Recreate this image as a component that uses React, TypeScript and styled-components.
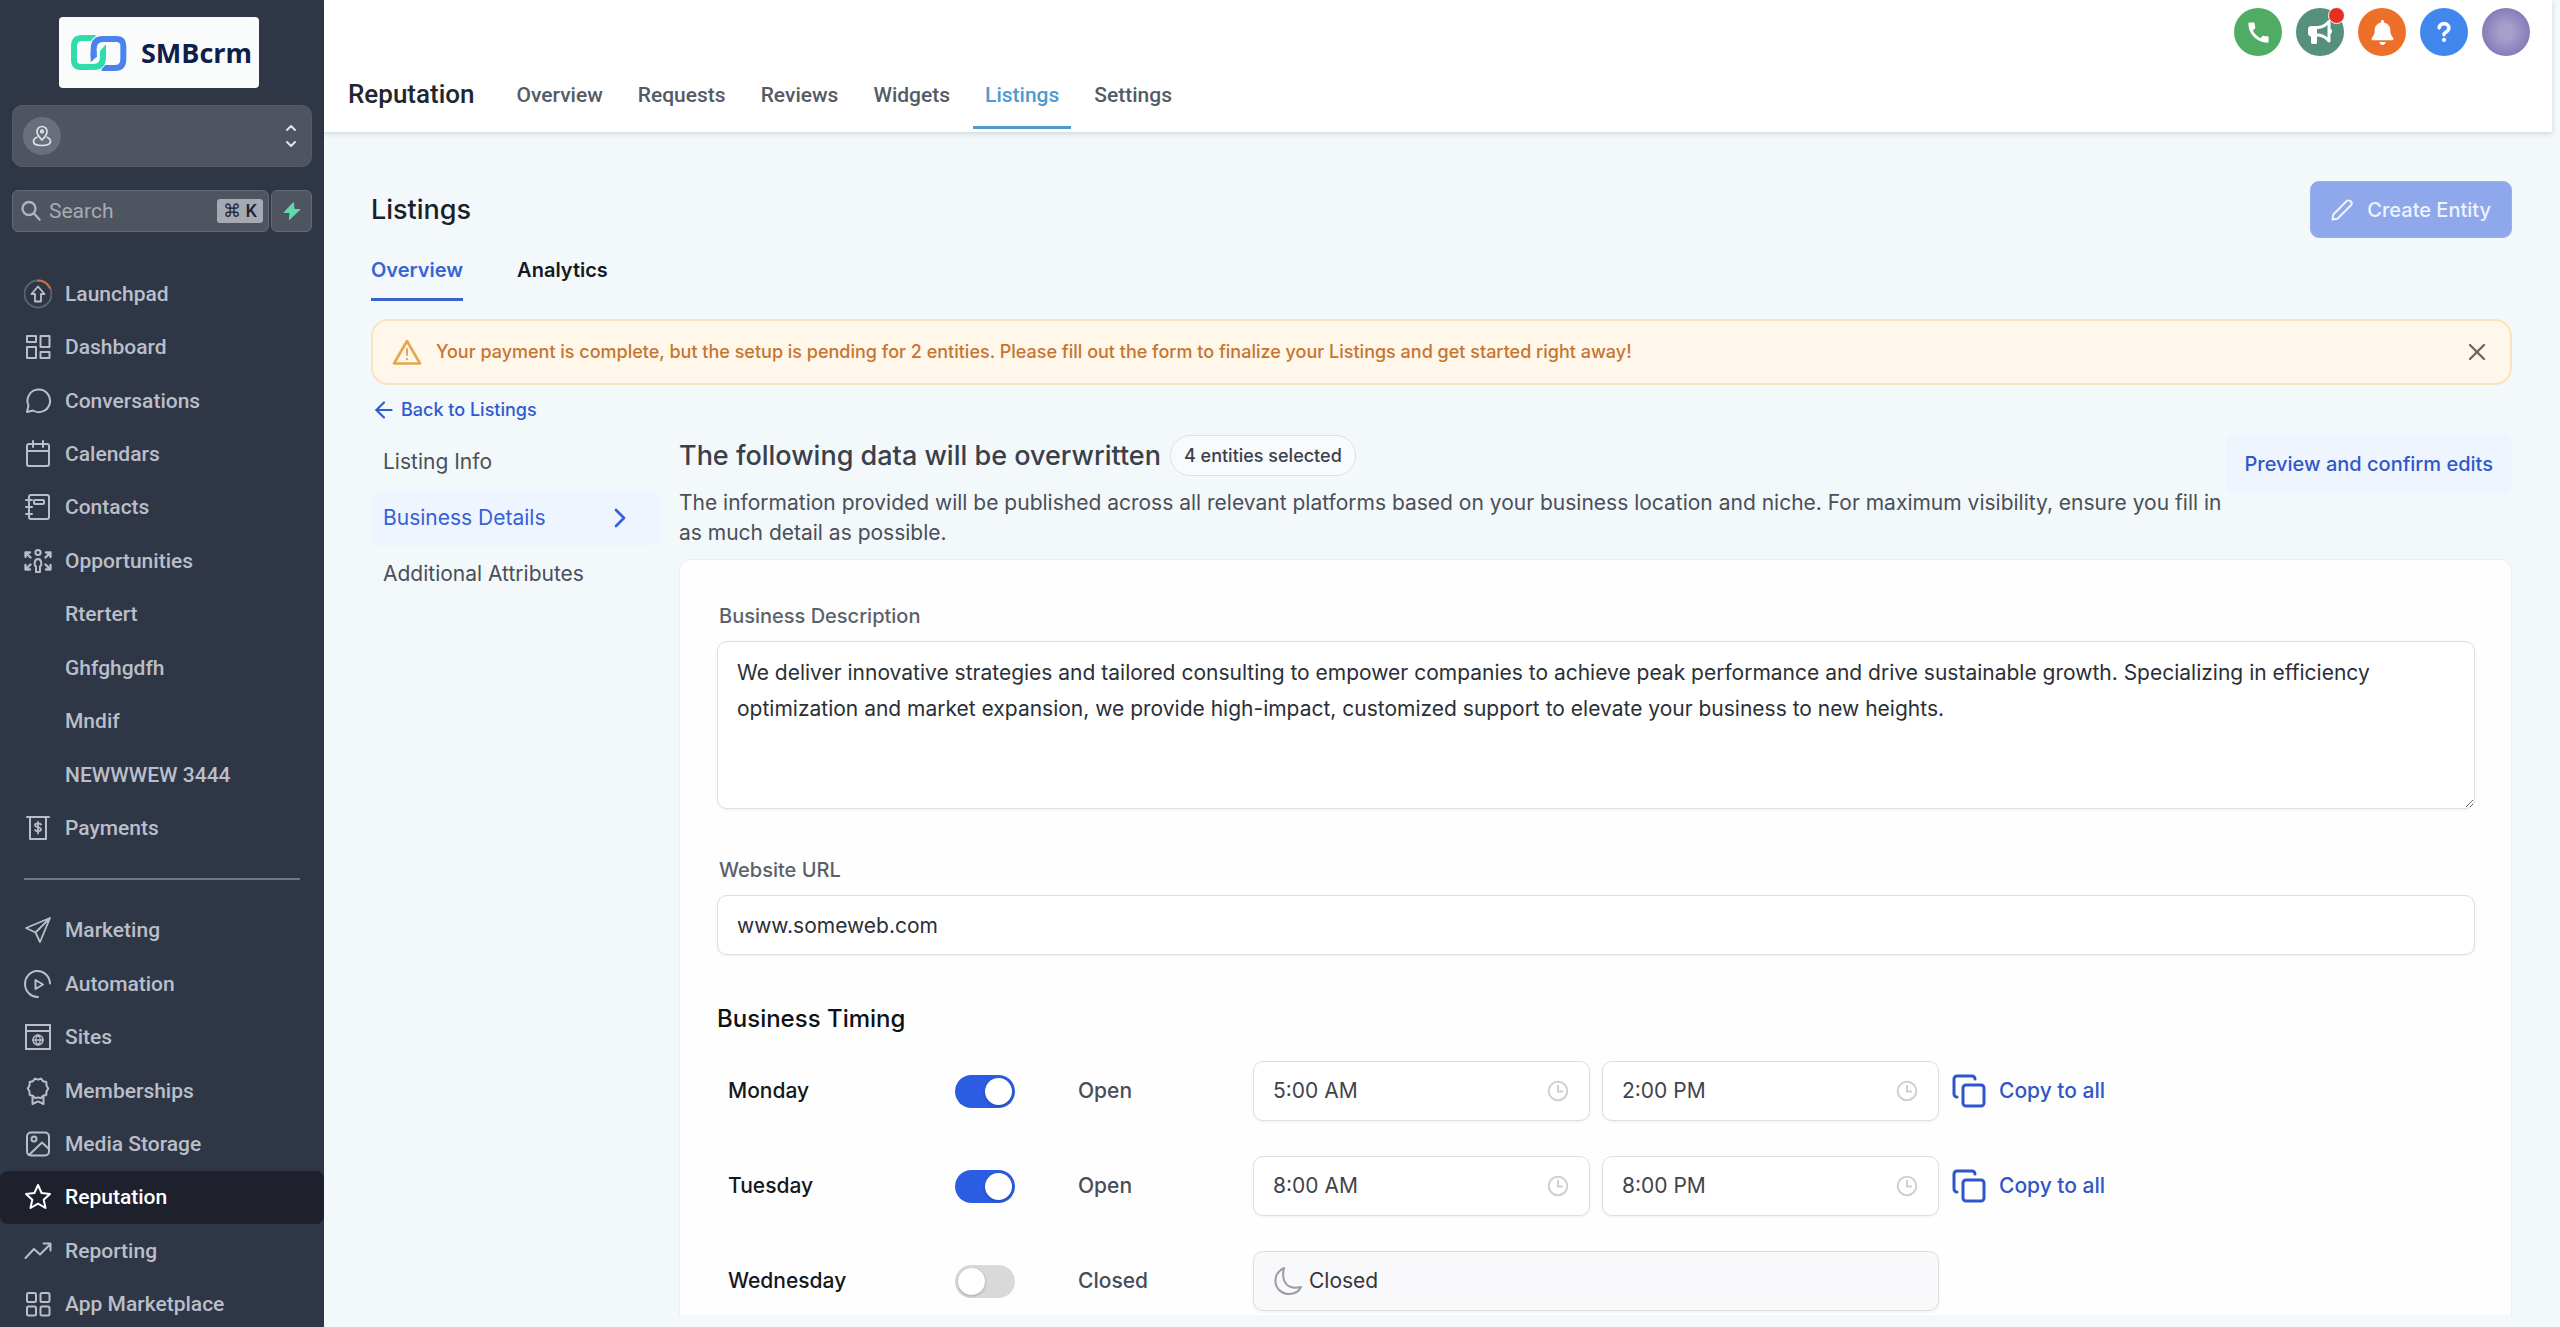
import React from "react";
import styled, { createGlobalStyle, css } from "styled-components";
import { ArrowLeft, ChevronDown, ChevronRight, ChevronUp, Copy, X } from "lucide-react";
import { FaBell, FaBullhorn, FaQuestion } from "react-icons/fa6";
import { MdCall } from "react-icons/md";

const ui = `Inter, "Liberation Sans", sans-serif`;
const shell = `Roboto, "Liberation Sans", sans-serif`;

const GlobalStyle = createGlobalStyle`
  *, *::before, *::after { box-sizing: border-box; }
  body { margin: 0; background: #f3f8fb; font-family: ${ui}; color: #1d2129; }
  button, input, textarea { font: inherit; color: inherit; }
  button { cursor: pointer; }
  a { color: inherit; text-decoration: none; }
  h1, h2, h3, p { margin: 0; }
`;

const Layout = styled.div`
  display: flex;
  height: 100vh;
  overflow: hidden;
`;

/* ---------- Sidebar ---------- */

const Sidebar = styled.aside`
  display: flex;
  flex-direction: column;
  flex: 0 0 324px;
  min-width: 0;
  padding-top: 17px;
  background: #2f3645;
  font-family: ${shell};
`;

const Logo = styled.a`
  display: flex;
  align-items: center;
  align-self: center;
  gap: 14px;
  width: 200px;
  height: 71px;
  padding-left: 12px;
  margin-right: 6px;
  border-radius: 4px;
  background: #fafbfb;
`;

const LogoText = styled.span`
  color: #0e2048;
  font: 700 27px/36px "Open Sans", "Noto Sans", sans-serif;
`;

const AccountButton = styled.button`
  display: flex;
  align-items: center;
  justify-content: space-between;
  height: 62px;
  margin: 17px 12px 0;
  padding: 0 12px 0 10px;
  border: 1px solid #555c68;
  border-radius: 10px;
  background: #4e5561;
  color: #dfe2e7;
`;

const AccountBadge = styled.span`
  display: grid;
  place-items: center;
  width: 38px;
  height: 38px;
  border-radius: 50%;
  background: #6a707b;
`;

const Carets = styled.span`
  display: flex;
  flex-direction: column;
`;

const SearchRow = styled.div`
  display: flex;
  gap: 2px;
  margin: 23px 12px 35px;
`;

const SearchBox = styled.label`
  display: flex;
  align-items: center;
  flex: 1;
  min-width: 0;
  gap: 8px;
  height: 42px;
  padding: 0 5px 0 8px;
  border: 1px solid #646b77;
  border-radius: 6px;
  background: #4e5561;
  color: #aeb3bc;
`;

const SearchInput = styled.input`
  flex: 1;
  min-width: 0;
  padding: 0;
  border: 0;
  outline: 0;
  background: none;
  font-size: 21px;
  line-height: 28px;
  &::placeholder { color: #a5abb5; opacity: 1; }
`;

const Shortcut = styled.kbd`
  padding: 0 6px;
  border-radius: 3px;
  background: #a4a9b2;
  color: #1f2530;
  font: 500 18px/24px ${shell};
  white-space: nowrap;
`;

const BoltButton = styled.button`
  display: grid;
  place-items: center;
  width: 41px;
  padding: 0;
  border: 1px solid #646b77;
  border-radius: 6px;
  background: #4e5561;
`;

const Nav = styled.nav`
  display: flex;
  flex-direction: column;
  flex: 1;
  min-height: 0;
  margin-bottom: -4px;
`;

const NavLink = styled.a<{ $active?: boolean }>`
  display: flex;
  align-items: center;
  flex: 1 0 0;
  gap: 13px;
  padding-left: 24px;
  border-radius: 8px;
  color: #b9bfca;
  font-size: 21px;
  line-height: 28px;
  font-weight: 500;
  ${(p) => p.$active && css`background: #1e202c; color: #fff;`}
`;

const NavIcon = styled.svg`
  flex: 0 0 28px;
  height: 32px;
  fill: none;
  stroke: currentColor;
  stroke-width: 2;
  stroke-linecap: round;
  stroke-linejoin: round;
`;

const NavDivider = styled.hr`
  flex: none;
  height: 2px;
  margin: 23px 24px 24px;
  border: 0;
  background: #6f7785;
`;

/* ---------- Header ---------- */

const Main = styled.main`
  display: flex;
  flex-direction: column;
  flex: 1;
  min-width: 0;
`;

const Header = styled.header`
  display: flex;
  flex-direction: column;
  justify-content: space-between;
  height: 132px;
  margin-right: 8px;
  padding: 8px 22px 0 24px;
  background: #fff;
  box-shadow: 0 2px 5px rgba(40, 50, 60, 0.16);
  font-family: ${shell};
`;

const Actions = styled.div`
  display: flex;
  justify-content: flex-end;
  gap: 14px;
`;

const RoundButton = styled.button<{ $bg: string }>`
  position: relative;
  display: grid;
  place-items: center;
  width: 48px;
  height: 48px;
  padding: 0;
  border: 0;
  border-radius: 50%;
  background: ${(p) => p.$bg};
  color: #fff;
`;

const AlertDot = styled.span`
  position: absolute;
  top: -1px;
  right: -1px;
  width: 17px;
  height: 17px;
  border: 1px solid #fff;
  border-radius: 50%;
  background: #e8301f;
`;

const HeaderNav = styled.nav`
  display: flex;
  align-items: flex-end;
  gap: 11px;
`;

const HeaderTitle = styled.h1`
  margin-right: 19px;
  padding-bottom: 22px;
  color: #22262e;
  font-size: 26px;
  line-height: 32px;
  font-weight: 500;
`;

const HeaderTab = styled.a<{ $active?: boolean }>`
  padding: 0 12px 17px;
  margin-bottom: 3px;
  border-bottom: 3px solid ${(p) => (p.$active ? "#4d9bcf" : "transparent")};
  color: ${(p) => (p.$active ? "#4d9bcf" : "#555b65")};
  font-size: 21px;
  line-height: 28px;
  font-weight: 500;
`;

/* ---------- Page ---------- */

const Page = styled.div`
  display: flex;
  flex-direction: column;
  flex: 1;
  min-height: 0;
  padding: 49px 48px 12px 47px;
`;

const TitleRow = styled.div`
  display: flex;
  align-items: center;
  justify-content: space-between;
`;

const PageTitle = styled.h2`
  color: #1b2029;
  font-size: 27px;
  line-height: 36px;
  font-weight: 500;
`;

const CreateButton = styled.button`
  display: flex;
  align-items: center;
  gap: 14px;
  height: 57px;
  padding: 0 20px;
  border: 1px solid #97aef0;
  border-radius: 9px;
  background: #8fa8ec;
  color: #eef4ff;
  font-size: 20px;
  line-height: 28px;
  font-weight: 500;
`;

const Tabs = styled.nav`
  display: flex;
  gap: 54px;
  margin-top: 18px;
`;

const Tab = styled.a<{ $active?: boolean }>`
  padding-bottom: 14px;
  border-bottom: 3px solid ${(p) => (p.$active ? "#3763cf" : "transparent")};
  color: ${(p) => (p.$active ? "#3763d6" : "#16191f")};
  font-size: 20px;
  line-height: 28px;
  font-weight: 600;
`;

const Notice = styled.div`
  display: flex;
  align-items: center;
  gap: 14px;
  min-height: 66px;
  margin-top: 18px;
  padding: 0 19px;
  border: 2px solid #f8e5c0;
  border-radius: 17px;
  background: #fff7ea;
  color: #c7742f;
`;

const NoticeText = styled.p`
  flex: 1;
  font-size: 18px;
  line-height: 26px;
  font-weight: 500;
`;

const CloseButton = styled.button`
  display: grid;
  place-items: center;
  padding: 0;
  border: 0;
  background: none;
  color: #6b6659;
`;

const BackLink = styled.a`
  display: flex;
  align-items: center;
  align-self: flex-start;
  gap: 4px;
  margin-top: 12px;
  color: #2f5bd0;
  font-size: 18px;
  line-height: 26px;
  font-weight: 500;
`;

const Columns = styled.div`
  display: flex;
  flex: 1;
  gap: 18px;
  min-height: 0;
  margin-top: 11px;
`;

const SideMenu = styled.nav`
  flex: 0 0 290px;
`;

const SideLink = styled.a<{ $active?: boolean }>`
  display: flex;
  align-items: center;
  justify-content: space-between;
  height: 56px;
  padding: 0 25px 0 12px;
  border-radius: 12px;
  color: ${(p) => (p.$active ? "#3560d8" : "#4a4f58")};
  background: ${(p) => (p.$active ? "#eff5ff" : "none")};
  font-size: 21px;
  line-height: 30px;
`;

const Content = styled.section`
  display: flex;
  flex-direction: column;
  flex: 1;
  min-width: 0;
`;

const Intro = styled.div`
  display: flex;
  align-items: flex-start;
  justify-content: space-between;
`;

const HeadingRow = styled.div`
  display: flex;
  align-items: center;
  gap: 9px;
  margin-top: 1px;
`;

const Heading = styled.h3`
  color: #3a404b;
  font-size: 27px;
  line-height: 36px;
  font-weight: 500;
`;

const Chip = styled.span`
  padding: 0 13px;
  border: 1px solid #dfe1e5;
  border-radius: 20px;
  background: #f9fafb;
  color: #3a404b;
  font-size: 18px;
  line-height: 39px;
  font-weight: 500;
`;

const Description = styled.p`
  margin-top: 12px;
  color: #4a4f59;
  font-size: 21px;
  line-height: 30px;
`;

const PreviewButton = styled.button`
  flex: none;
  height: 60px;
  padding: 0 19px;
  border: 0;
  border-radius: 9px;
  background: #eff5ff;
  color: #2f58c8;
  font-size: 20px;
  line-height: 28px;
  font-weight: 500;
`;

const Card = styled.form`
  flex: 1;
  min-height: 0;
  margin-top: 11px;
  padding: 42px 36px 0 37px;
  overflow: hidden auto;
  scrollbar-width: none;
  border: 1px solid #ebeeee;
  border-bottom: 0;
  border-radius: 12px 12px 0 0;
  background: #fefefe;
`;

const Label = styled.label`
  display: block;
  padding-left: 2px;
  color: #5c6169;
  font-size: 20px;
  line-height: 28px;
  font-weight: 500;
`;

const boxed = css`
  border: 1px solid #dededf;
  border-radius: 10px;
  outline: 0;
  background: #fff;
  box-shadow: 0 1px 3px rgba(16, 24, 40, 0.06);
`;

const TextArea = styled.textarea`
  ${boxed}
  display: block;
  width: 100%;
  height: 168px;
  margin: 11px 0 47px;
  padding: 13px 19px;
  color: #2b2f36;
  font-size: 21px;
  line-height: 36px;
`;

const TextInput = styled.input`
  ${boxed}
  display: block;
  width: 100%;
  height: 60px;
  margin: 11px 0 46px;
  padding: 0 19px;
  color: #2b2f36;
  font-size: 21px;
`;

const Hours = styled.fieldset`
  display: grid;
  gap: 35px;
  margin: 0;
  padding: 0;
  border: 0;
`;

const HoursTitle = styled.legend`
  padding: 0;
  margin-bottom: 24px;
  color: #0e1116;
  font-size: 24px;
  line-height: 36px;
  font-weight: 500;
`;

const DayRow = styled.div`
  display: grid;
  grid-template-columns: 227px 123px 175px 686px auto 1fr;
  align-items: center;
  height: 60px;
  padding-left: 11px;
`;

const DayName = styled.label`
  color: #14171c;
  font-size: 21px;
  line-height: 28px;
  font-weight: 500;
`;

const Toggle = styled.input`
  appearance: none;
  display: flex;
  align-items: center;
  width: 60px;
  height: 33px;
  margin: 0;
  padding: 3px;
  border-radius: 17px;
  background: #d9d9d9;
  cursor: pointer;
  &::before {
    content: "";
    width: 27px;
    height: 27px;
    border-radius: 50%;
    background: #fff;
    box-shadow: 0 1px 3px rgba(0, 0, 0, 0.25);
  }
  &:checked { justify-content: flex-end; background: #2b5ce2; }
`;

const Status = styled.span`
  color: #474d58;
  font-size: 21px;
  line-height: 28px;
  font-weight: 500;
`;

const Times = styled.div`
  display: flex;
  gap: 12px;
`;

const TimeBox = styled.div<{ $closed?: boolean }>`
  ${boxed}
  display: flex;
  align-items: center;
  flex: 1;
  gap: 6px;
  min-width: 0;
  height: 60px;
  padding: 0 20px 0 19px;
  color: ${(p) => (p.$closed ? "#33373e" : "#3f444c")};
  background: ${(p) => (p.$closed ? "#f9f9fb" : "#fff")};
  font-size: 21px;
  line-height: 30px;
`;

const TimeInput = styled.input`
  flex: 1;
  min-width: 0;
  padding: 0;
  border: 0;
  outline: 0;
  background: none;
`;

const CopyButton = styled.button`
  display: flex;
  align-items: center;
  gap: 12px;
  margin-left: 12px;
  padding: 0;
  border: 0;
  background: none;
  color: #2d57c9;
  font-size: 21px;
  line-height: 28px;
  font-weight: 500;
`;

/* ---------- Icons, drawn on a 28 x 32 grid ---------- */

const icons: Record<string, React.ReactNode> = {
  launchpad: (
    <>
      <circle cx="14" cy="16" r="13.500" stroke="#59616e" />
      <path d="M14 2.500a13.500 13.500 0 0 1 12 7.500" stroke="#c9713c" />
      <path d="M14 8.500l6.500 7.500h-3.500v7.500h-6V16H7.500z" strokeWidth="1.800" />
    </>
  ),
  dashboard: (
    <path d="M3 5h9v6H3zM16.500 5h9v11h-9zM3 16h9v11H3zM16.500 21h9v6h-9z" />
  ),
  conversations: (
    <path d="M3 27l1.500-6.500A11.300 11.300 0 1 1 9 25.500z" />
  ),
  calendar: (
    <>
      <rect x="3" y="6" width="22" height="22" rx="2" />
      <path d="M3 13h22M9 3v6M19 3v6" />
    </>
  ),
  contacts: (
    <>
      <rect x="5" y="4" width="20" height="24" rx="2" />
      <rect x="10" y="9" width="10" height="4" rx="1" />
      <path d="M2 9h6M2 16h6M2 23h6" />
    </>
  ),
  opportunities: (
    <>
      <circle cx="14" cy="7.500" r="2.600" />
      <path d="M12 27v-5.500c-2-1-2-7.500 2-7.500s4 6.500 2 7.500V27z" />
      <path d="M1.500 12V7.500H6M1.500 7.500l5 5M26.500 12V7.500H22M26.500 7.500l-5 5M1.500 20v4.500H6M1.500 24.500l5-5M26.500 20v4.500H22M26.500 24.500l-5-5" strokeWidth="2.300" />
    </>
  ),
  payments: (
    <>
      <path d="M3 5h22M6 5v22h16V5" />
      <path d="M17 12.500c-1-1.500-6-1.500-6 .800s6 1.600 6 4-5 2.400-6 .700M14 10v11.500" strokeWidth="1.800" />
    </>
  ),
  marketing: <path d="M26 4L2 14l9.500 4.500L16 28zM26 4L11.500 18.500" strokeWidth="1.800" />,
  automation: (
    <>
      <path d="M26 15.500A12.500 13 0 1 0 14 29" />
      <path d="M11.500 12v9l7.500-4.500z" />
    </>
  ),
  sites: (
    <>
      <path d="M2 4h24v24H2zM2 10h24" strokeLinejoin="miter" />
      <circle cx="14" cy="19" r="5" strokeWidth="1.600" />
      <path d="M9 19h10M14 14c-3 3-3 7 0 10M14 14c3 3 3 7 0 10" strokeWidth="1.400" />
    </>
  ),
  memberships: (
    <>
      <path d="M11 3.500q3 2 6 0l2 2.700 3.300.800.200 3.500 1.700 3-1.700 3-.200 3.500-3.300.800-2 2.400q-3-1.500-6 0l-2-2.400-3.300-.800-.200-3.500-1.700-3 1.700-3 .200-3.500 3.300-.800z" />
      <path d="M8.500 22v7l5.500-2.600 5.500 2.600v-7" />
    </>
  ),
  media: (
    <>
      <rect x="3" y="4.500" width="22" height="23" rx="4" />
      <circle cx="10" cy="11" r="2.500" />
      <path d="M5 27l13-12.500 7 6.500" />
    </>
  ),
  star: <path d="M14 4l3.600 8 8.400.900-6.300 5.800L21.500 27 14 22.700 6.500 27l1.800-8.300L2 12.900l8.400-.900z" />,
  reporting: <path d="M1.500 23l8.500-9 6 5.500L26.500 9M19.500 8.500h7v7" />,
  apps: (
    <>
      <rect x="3" y="5" width="9" height="9" rx="1.500" />
      <rect x="16.500" y="5" width="9" height="9" rx="1.500" />
      <rect x="3" y="18.500" width="9" height="9" rx="1.500" />
      <rect x="16.500" y="18.500" width="9" height="9" rx="1.500" />
    </>
  ),
};

const primaryNav = [
  ["Launchpad", "launchpad"],
  ["Dashboard", "dashboard"],
  ["Conversations", "conversations"],
  ["Calendars", "calendar"],
  ["Contacts", "contacts"],
  ["Opportunities", "opportunities"],
  ["Rtertert", ""],
  ["Ghfghgdfh", ""],
  ["Mndif", ""],
  ["NEWWWEW 3444", ""],
  ["Payments", "payments"],
];

const secondaryNav = [
  ["Marketing", "marketing"],
  ["Automation", "automation"],
  ["Sites", "sites"],
  ["Memberships", "memberships"],
  ["Media Storage", "media"],
  ["Reputation", "star"],
  ["Reporting", "reporting"],
  ["App Marketplace", "apps"],
];

const days = [
  { name: "Monday", open: "5:00 AM", close: "2:00 PM" },
  { name: "Tuesday", open: "8:00 AM", close: "8:00 PM" },
  { name: "Wednesday" },
];

function NavItem({ label, icon }: { label: string; icon: string }) {
  return (
    <NavLink href="#" $active={label === "Reputation"}>
      <NavIcon viewBox="0 0 28 32" aria-hidden="true">{icons[icon]}</NavIcon>
      {label}
    </NavLink>
  );
}

function LogoMark() {
  return (
    <svg width="56" height="36" viewBox="0 0 168 108" fill="none" aria-hidden="true">
      <path d="M74 9H34C17 9 9 18 9 34v40c0 16 8 22 23 22h36" stroke="#2fdcae" strokeWidth="18" />
      <path d="M68 66V42c0-20 10-30 28-30h28" stroke="#fafbfb" strokeWidth="26" />
      <path d="M68 66V42c0-20 10-30 28-30h40c14 0 21 7 21 20v40c0 18-9 27-25 27H92" stroke="#4a83ee" strokeWidth="18" />
      <path d="M96 47v19c0 20-10 30-28 30H50" stroke="#fafbfb" strokeWidth="24" />
      <path d="M96 47v19c0 20-10 30-28 30H34" stroke="#2fdcae" strokeWidth="18" />
      <path d="M87 48L105 28V48z" fill="#2fdcae" />
      <path d="M68 66V50" stroke="#4a83ee" strokeWidth="18" />
      <path d="M59 65h18L59 82z" fill="#4a83ee" />
    </svg>
  );
}

function PinIcon() {
  return (
    <svg width="20" height="22" viewBox="0 0 20 22" fill="none" stroke="currentColor" strokeWidth="1.700" strokeLinejoin="round" aria-hidden="true">
      <path d="M10 15c-3-3-5-5.500-5-8.500a5 5 0 0 1 10 0C15 9.500 13 12 10 15z" />
      <circle cx="10" cy="6.500" r="1.300" />
      <path d="M5.500 12C3 13 1.500 14.500 1.500 16.500c0 2.500 3.500 4 8.500 4s8.500-1.500 8.500-4c0-2-1.500-3.500-4-4.500" />
    </svg>
  );
}

function SearchIcon() {
  return (
    <svg width="20" height="22" viewBox="0 0 20 22" fill="none" stroke="currentColor" strokeWidth="2.400" strokeLinecap="round" aria-hidden="true">
      <circle cx="8" cy="8.500" r="6.500" />
      <path d="M13 13.500l5.500 6" />
    </svg>
  );
}

function BoltIcon() {
  return (
    <svg width="18" height="20" viewBox="0 0 18 20" fill="#5fdba7" aria-hidden="true">
      <path d="M10.500 1.500L1 11.500h6L6.500 18.500 17 8.500h-6z" stroke="#5fdba7" strokeLinejoin="round" />
    </svg>
  );
}

function PencilIcon() {
  return (
    <svg width="22" height="22" viewBox="0 0 22 22" fill="none" stroke="currentColor" strokeWidth="2" strokeLinejoin="round" aria-hidden="true">
      <path d="M1.500 20.500l.8-5L15.500 2.300a2.900 2.900 0 0 1 4.200 4.200L6.500 19.700z" />
    </svg>
  );
}

function WarningIcon() {
  return (
    <svg width="30" height="28" viewBox="0 0 30 28" fill="none" stroke="#e5a64c" strokeLinejoin="round" strokeLinecap="round" aria-hidden="true">
      <path d="M15 3L28 25.500H2z" strokeWidth="2.600" />
      <path d="M15 11v6M15 20.800v.4" strokeWidth="2" />
    </svg>
  );
}

function ClockIcon() {
  return (
    <svg width="22" height="22" viewBox="0 0 22 22" fill="none" stroke="#cfd0d3" strokeWidth="2" aria-hidden="true">
      <circle cx="11" cy="11" r="9.300" />
      <path d="M11 5v6.500h5" />
    </svg>
  );
}

function MoonIcon() {
  return (
    <svg width="30" height="30" viewBox="0 0 30 30" fill="none" stroke="#9a9da6" strokeWidth="2" strokeLinejoin="round" aria-hidden="true">
      <path d="M11 2C5 5 2 10 2.500 16 3 23 9 28 16 28c5 0 10-2.500 12-7-9 2-15-1-17-7-1.300-4-1-8 0-12z" />
    </svg>
  );
}

function TimeField({ label, value }: { label: string; value: string }) {
  return (
    <TimeBox>
      <TimeInput type="text" aria-label={label} defaultValue={value} />
      <ClockIcon />
    </TimeBox>
  );
}

export default function App() {
  return (
    <Layout>
      <GlobalStyle />
      <Sidebar>
        <Logo href="#">
          <LogoMark />
          <LogoText>SMBcrm</LogoText>
        </Logo>
        <AccountButton type="button" aria-label="Switch account">
          <AccountBadge><PinIcon /></AccountBadge>
          <Carets>
            <ChevronUp size={16} strokeWidth={3} />
            <ChevronDown size={16} strokeWidth={3} />
          </Carets>
        </AccountButton>
        <SearchRow>
          <SearchBox>
            <SearchIcon />
            <SearchInput type="text" placeholder="Search" aria-label="Search" />
            <Shortcut>⌘ K</Shortcut>
          </SearchBox>
          <BoltButton type="button" aria-label="Quick actions"><BoltIcon /></BoltButton>
        </SearchRow>
        <Nav>
          {primaryNav.map(([label, icon]) => <NavItem key={label} label={label} icon={icon} />)}
          <NavDivider />
          {secondaryNav.map(([label, icon]) => <NavItem key={label} label={label} icon={icon} />)}
        </Nav>
      </Sidebar>

      <Main>
        <Header>
          <Actions>
            <RoundButton type="button" aria-label="Call" $bg="#4fac62"><MdCall size={27} /></RoundButton>
            <RoundButton type="button" aria-label="Announcements" $bg="#55907c">
              <FaBullhorn size={24} />
              <AlertDot />
            </RoundButton>
            <RoundButton type="button" aria-label="Notifications" $bg="#ec7029"><FaBell size={25} /></RoundButton>
            <RoundButton type="button" aria-label="Help" $bg="#4187ee"><FaQuestion size={22} stroke="#fff" strokeWidth={20} /></RoundButton>
            <RoundButton type="button" aria-label="Profile" $bg="radial-gradient(circle, #a5a0cb 20%, #8478b8 75%)" />
          </Actions>
          <HeaderNav>
            <HeaderTitle>Reputation</HeaderTitle>
            {["Overview", "Requests", "Reviews", "Widgets", "Listings", "Settings"].map((tab) => (
              <HeaderTab key={tab} href="#" $active={tab === "Listings"}>{tab}</HeaderTab>
            ))}
          </HeaderNav>
        </Header>

        <Page>
          <TitleRow>
            <PageTitle>Listings</PageTitle>
            <CreateButton type="button"><PencilIcon />Create Entity</CreateButton>
          </TitleRow>
          <Tabs>
            <Tab href="#" $active>Overview</Tab>
            <Tab href="#">Analytics</Tab>
          </Tabs>
          <Notice role="alert">
            <WarningIcon />
            <NoticeText>
              Your payment is complete, but the setup is pending for 2 entities. Please fill out the form to finalize your Listings and get started right away!
            </NoticeText>
            <CloseButton type="button" aria-label="Dismiss"><X size={28} strokeWidth={2} /></CloseButton>
          </Notice>
          <BackLink href="#"><ArrowLeft size={26} strokeWidth={2} />Back to Listings</BackLink>

          <Columns>
            <SideMenu>
              <SideLink href="#">Listing Info</SideLink>
              <SideLink href="#" $active>Business Details<ChevronRight size={32} strokeWidth={2} /></SideLink>
              <SideLink href="#">Additional Attributes</SideLink>
            </SideMenu>
            <Content>
              <Intro>
                <div>
                  <HeadingRow>
                    <Heading>The following data will be overwritten</Heading>
                    <Chip>4 entities selected</Chip>
                  </HeadingRow>
                  <Description>
                    The information provided will be published across all relevant platforms based on your business location and niche. For maximum visibility, ensure you fill in as much detail as possible.
                  </Description>
                </div>
                <PreviewButton type="button">Preview and confirm edits</PreviewButton>
              </Intro>
              <Card>
                <Label htmlFor="description">Business Description</Label>
                <TextArea
                  id="description"
                  defaultValue="We deliver innovative strategies and tailored consulting to empower companies to achieve peak performance and drive sustainable growth. Specializing in efficiency optimization and market expansion, we provide high-impact, customized support to elevate your business to new heights."
                />
                <Label htmlFor="website">Website URL</Label>
                <TextInput id="website" type="text" defaultValue="www.someweb.com" />
                <Hours>
                  <HoursTitle>Business Timing</HoursTitle>
                  {days.map((day) => (
                    <DayRow key={day.name}>
                      <DayName htmlFor={day.name}>{day.name}</DayName>
                      <Toggle id={day.name} type="checkbox" defaultChecked={!!day.open} />
                      <Status>{day.open ? "Open" : "Closed"}</Status>
                      <Times>
                        {day.open ? (
                          <>
                            <TimeField label={`${day.name} opens`} value={day.open} />
                            <TimeField label={`${day.name} closes`} value={day.close} />
                          </>
                        ) : (
                          <TimeBox $closed><MoonIcon />Closed</TimeBox>
                        )}
                      </Times>
                      {day.open && <CopyButton type="button"><Copy size={36} strokeWidth={2} />Copy to all</CopyButton>}
                    </DayRow>
                  ))}
                </Hours>
              </Card>
            </Content>
          </Columns>
        </Page>
      </Main>
    </Layout>
  );
}
